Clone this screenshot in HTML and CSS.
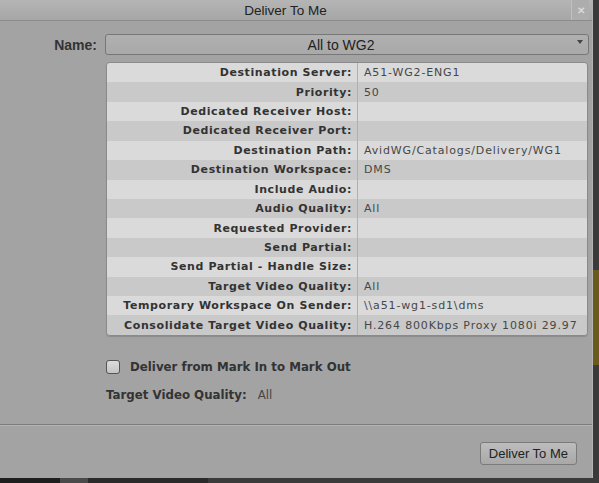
FILE: index.html
```html
<!DOCTYPE html>
<html lang="en">
<head>
  <meta charset="UTF-8" />
  <title>Deliver To Me</title>
  <link rel="stylesheet" href="styles.css">
</head>
<body>

  <div class="screen">
    <div class="dialog">
      <div class="titlebar">
        <span class="title">Deliver To Me</span>
        <span class="close">&#x2715;</span>
      </div>

      <div class="name-row">
        <label class="name-label">Name:</label>
        <div class="select">
          <span>All to WG2</span>
          <span class="arrow"></span>
        </div>
      </div>

      <div class="details">
        <div class="row"><span class="key">Destination Server:</span><span class="val">A51-WG2-ENG1</span></div>
        <div class="row"><span class="key">Priority:</span><span class="val">50</span></div>
        <div class="row"><span class="key">Dedicated Receiver Host:</span><span class="val"></span></div>
        <div class="row"><span class="key">Dedicated Receiver Port:</span><span class="val"></span></div>
        <div class="row"><span class="key">Destination Path:</span><span class="val">AvidWG/Catalogs/Delivery/WG1</span></div>
        <div class="row"><span class="key">Destination Workspace:</span><span class="val">DMS</span></div>
        <div class="row"><span class="key">Include Audio:</span><span class="val"></span></div>
        <div class="row"><span class="key">Audio Quality:</span><span class="val">All</span></div>
        <div class="row"><span class="key">Requested Provider:</span><span class="val"></span></div>
        <div class="row"><span class="key">Send Partial:</span><span class="val"></span></div>
        <div class="row"><span class="key">Send Partial - Handle Size:</span><span class="val"></span></div>
        <div class="row"><span class="key">Target Video Quality:</span><span class="val">All</span></div>
        <div class="row"><span class="key">Temporary Workspace On Sender:</span><span class="val">\\a51-wg1-sd1\dms</span></div>
        <div class="row"><span class="key">Consolidate Target Video Quality:</span><span class="val">H.264 800Kbps Proxy 1080i 29.97</span></div>
      </div>

      <div class="options">
        <label class="check"><span class="box"></span>Deliver from Mark In to Mark Out</label>
        <div class="quality"><span class="q-label">Target Video Quality:</span><span class="q-val">All</span></div>
      </div>

      <div class="footer">
        <button class="deliver-btn">Deliver To Me</button>
      </div>
    </div>
    <div class="side"><span class="side-gold"></span></div>
  </div>

  <div class="taskbar">
    <span class="tb-dark"></span>
    <span class="tb-mid"></span>
    <span class="tb-dark wide"></span>
  </div>

</body>
</html>
```

FILE: styles.css
```css
body {
  margin: 0;
  background-color: #2c2c2c;
  font-family: "DejaVu Sans", Verdana, sans-serif;
  color: #333;
  overflow: hidden;
}

.screen {
  display: flex;
  height: 478px;
}

.dialog {
  width: 592px;
  background-color: #a3a3a3;
  border-right: 1px solid #b4b4b4;
  display: flex;
  flex-direction: column;
}

.side {
  flex: 1;
  background-color: #3a3a3a;
  display: flex;
  flex-direction: column;
  padding-top: 270px;
}

.side-gold {
  height: 95px;
  background-color: #6a5a1c;
}

/* title */
.titlebar {
  height: 20px;
  display: flex;
  align-items: center;
  background: linear-gradient(#b5b5b5, #a6a6a6);
  border-bottom: 1px solid #8c8c8c;
  font-family: "Liberation Sans", Arial, sans-serif;
  font-size: 13.5px;
  color: #222;
}

.title {
  flex: 1;
  text-align: center;
}

.close {
  width: 17px;
  height: 20px;
  margin-right: 3px;
  border-left: 1px solid #c0c0c0;
  background-color: #adadad;
  display: flex;
  align-items: center;
  justify-content: center;
  font-size: 10px;
  color: #dadada;
  font-weight: bold;
}

/* name */
.name-row {
  display: flex;
  align-items: center;
  margin-top: 13px;
  font-family: "Liberation Sans", Arial, sans-serif;
}

.name-label {
  width: 97px;
  text-align: right;
  font-weight: bold;
  font-size: 14px;
  color: #333;
}

.select {
  margin-left: 8px;
  width: 470px;
  height: 19px;
  padding-right: 12px;
  border: 1px solid #777;
  border-radius: 3px;
  background: linear-gradient(#b0b0b0, #a9a9a9);
  display: flex;
  align-items: center;
  justify-content: center;
  font-size: 14px;
  color: #222;
  position: relative;
}

.arrow {
  position: absolute;
  right: 5px;
  top: 5px;
  border-left: 3px solid transparent;
  border-right: 3px solid transparent;
  border-top: 4px solid #444;
}

/* detail table */
.details {
  margin: 7px 0 0 106px;
  width: 480px;
  border: 1px solid #8a8a8a;
  border-radius: 4px;
  overflow: hidden;
  box-shadow: 0 1px 1px rgba(0,0,0,0.15);
}

.row {
  display: flex;
  height: 19.43px;
  align-items: center;
  font-size: 11px;
  background-color: #dadada;
}

.row:nth-child(even) {
  background-color: #c9c9c9;
}

.key {
  flex: 0 0 245px;
  padding-right: 5px;
  letter-spacing: 0.6px;
  white-space: nowrap;
  font-weight: bold;
  color: #333;
  border-right: 1px solid #b0b0b0;
  align-self: stretch;
  display: flex;
  align-items: center;
  justify-content: flex-end;
}

.val {
  padding-left: 6px;
  letter-spacing: 0.85px;
  color: #474747;
  white-space: nowrap;
  overflow: hidden;
}

/* options */
.options {
  margin: 24px 0 0 106px;
  display: flex;
  flex-direction: column;
  gap: 14px;
  font-size: 11.8px;
}

.check {
  display: flex;
  align-items: center;
  font-weight: bold;
  color: #333;
}

.box {
  width: 12px;
  height: 12px;
  border: 1px solid #555;
  border-radius: 3px;
  background: linear-gradient(#dcdcdc, #c4c4c4);
  margin-right: 10px;
}

.quality {
  display: flex;
}

.q-label {
  font-weight: bold;
  color: #333;
}

.q-val {
  margin-left: 11px;
  color: #474747;
}

/* bottom */
.footer {
  margin-top: auto;
  height: 54px;
  border-top: 1px solid #7c7c7c;
  box-shadow: inset 0 1px 0 #b4b4b4;
  display: flex;
  align-items: center;
  justify-content: flex-end;
  padding-right: 15px;
  padding-top: 3px;
  box-sizing: border-box;
}

.deliver-btn {
  font-family: "Liberation Sans", Arial, sans-serif;
  font-size: 13px;
  color: #222;
  padding: 2px 8px;
  height: 23px;
  border: 1px solid #7a7a7a;
  border-radius: 3px;
  background: linear-gradient(#bdbdbd, #a8a8a8);
}

.taskbar {
  height: 5px;
  display: flex;
  background-color: #3b3b3b;
}

.tb-dark {
  width: 60px;
  background-color: #1e1e1e;
}

.tb-mid {
  width: 28px;
  background-color: #4a4a4a;
}

.tb-dark.wide {
  width: 120px;
  background-color: #2a2a2a;
}
```
